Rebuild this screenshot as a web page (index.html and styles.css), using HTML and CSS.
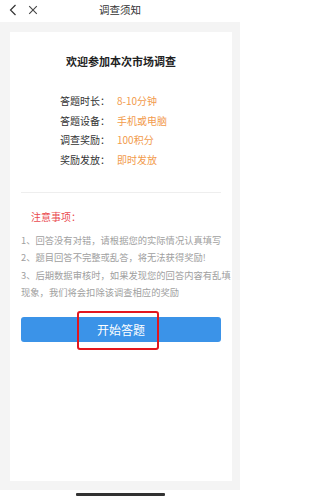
FILE: index.html
```html
<!DOCTYPE html>
<html lang="zh-CN">
<head>
<meta charset="utf-8">
<meta name="viewport" content="width=240">
<title>调查须知</title>
<link rel="stylesheet" href="styles.css">
</head>
<body>
<div class="page">
  <header class="topbar">
    <div class="nav">
      <svg class="icon-back" width="8" height="12" viewBox="0 0 8 12"><polyline points="6.5,1 1.5,6 6.5,11" fill="none" stroke="#333" stroke-width="1.2"/></svg>
      <svg class="icon-close" width="10" height="10" viewBox="0 0 10 10"><path d="M1.2 1.2 L8.8 8.8 M8.8 1.2 L1.2 8.8" fill="none" stroke="#444" stroke-width="1.1"/></svg>
    </div>
    <div class="title">调查须知</div>
    <div class="spacer"></div>
  </header>
  <main class="main">
    <section class="card">
      <h1 class="card-title">欢迎参加本次市场调查</h1>
      <div class="info">
        <div class="label">答题时长：</div><div class="value">8-10分钟</div>
        <div class="label">答题设备：</div><div class="value">手机或电脑</div>
        <div class="label">调查奖励：</div><div class="value">100积分</div>
        <div class="label">奖励发放：</div><div class="value">即时发放</div>
      </div>
      <div class="divider"></div>
      <div class="notice-title">注意事项：</div>
      <div class="notes">
        <p>1、回答没有对错，请根据您的实际情况认真填写</p>
        <p>2、题目回答不完整或乱答，将无法获得奖励!</p>
        <p>3、后期数据审核时，如果发现您的回答内容有乱填现象，我们将会扣除该调查相应的奖励</p>
      </div>
      <div class="btn-wrap">
        <button class="btn">开始答题</button>
        <span class="highlight"></span>
      </div>
    </section>
  </main>
  <footer class="footer"><span class="home-bar"></span></footer>
</div>
</body>
</html>
```
FILE: styles.css
```css
* { box-sizing: border-box; }
html, body { margin: 0; padding: 0; background: #fff; }
body {
  font-family: "Noto Sans CJK SC", "Noto Sans", "Liberation Sans", sans-serif;
  overflow: hidden;
}
.page {
  display: flex;
  flex-direction: column;
  width: 240px;
  height: 500px;
  overflow: hidden;
}
.topbar {
  height: 22px;
  background: #fff;
  display: grid;
  grid-template-columns: 1fr auto 1fr;
  align-items: center;
}
.nav {
  display: flex;
  align-items: center;
  padding-left: 9px;
  gap: 11px;
  padding-bottom: 3px;
}
.icon-back, .icon-close { display: block; }
.title {
  font-size: 10.5px;
  line-height: 20px;
  color: #333;
  padding-bottom: 2px;
}
.main {
  flex: 1;
  min-width: 0;
  background: #f4f4f4;
  padding: 10px 8px 9px 10px;
  display: flex;
}
.card {
  flex: 1;
  min-width: 0;
  background: #fff;
  padding: 21px 11px 0 11px;
}
.card-title {
  margin: 0;
  text-align: center;
  font-size: 11px;
  line-height: 16px;
  font-weight: bold;
  color: #222;
}
.info {
  margin-top: 22px;
  padding-left: 39px;
  display: grid;
  grid-template-columns: 57px auto;
  font-size: 10px;
  line-height: 19.5px;
}
.label { color: #333; }
.value { color: #f29b4c; }
.divider {
  margin-top: 23px;
  height: 1px;
  background: #eeeeee;
}
.notice-title {
  margin-top: 16px;
  padding-left: 10px;
  font-size: 10px;
  line-height: 16px;
  color: #ea4b4f;
}
.notes {
  margin-top: 7px;
  margin-right: -11px;
  font-size: 9.3px;
  line-height: 17.3px;
  color: #a0a0a0;
}
.notes p { margin: 0; }
.btn-wrap {
  position: relative;
  margin-top: 16px;
}
.btn {
  display: block;
  width: 200px;
  height: 25px;
  border: 0;
  border-radius: 3px;
  background: #3b93e8;
  color: #fff;
  font-family: inherit;
  font-size: 12px;
  line-height: 25px;
  padding: 0;
}
.highlight {
  position: absolute;
  left: 56px;
  top: -6px;
  width: 82px;
  height: 39px;
  border: 2px solid #e3161e;
  border-radius: 3px;
}
.footer {
  height: 10px;
  background: #fff;
  display: flex;
  justify-content: center;
  padding-top: 3px;
}
.home-bar {
  display: block;
  width: 89px;
  height: 3px;
  background: #333;
  border-radius: 1px;
}
```
